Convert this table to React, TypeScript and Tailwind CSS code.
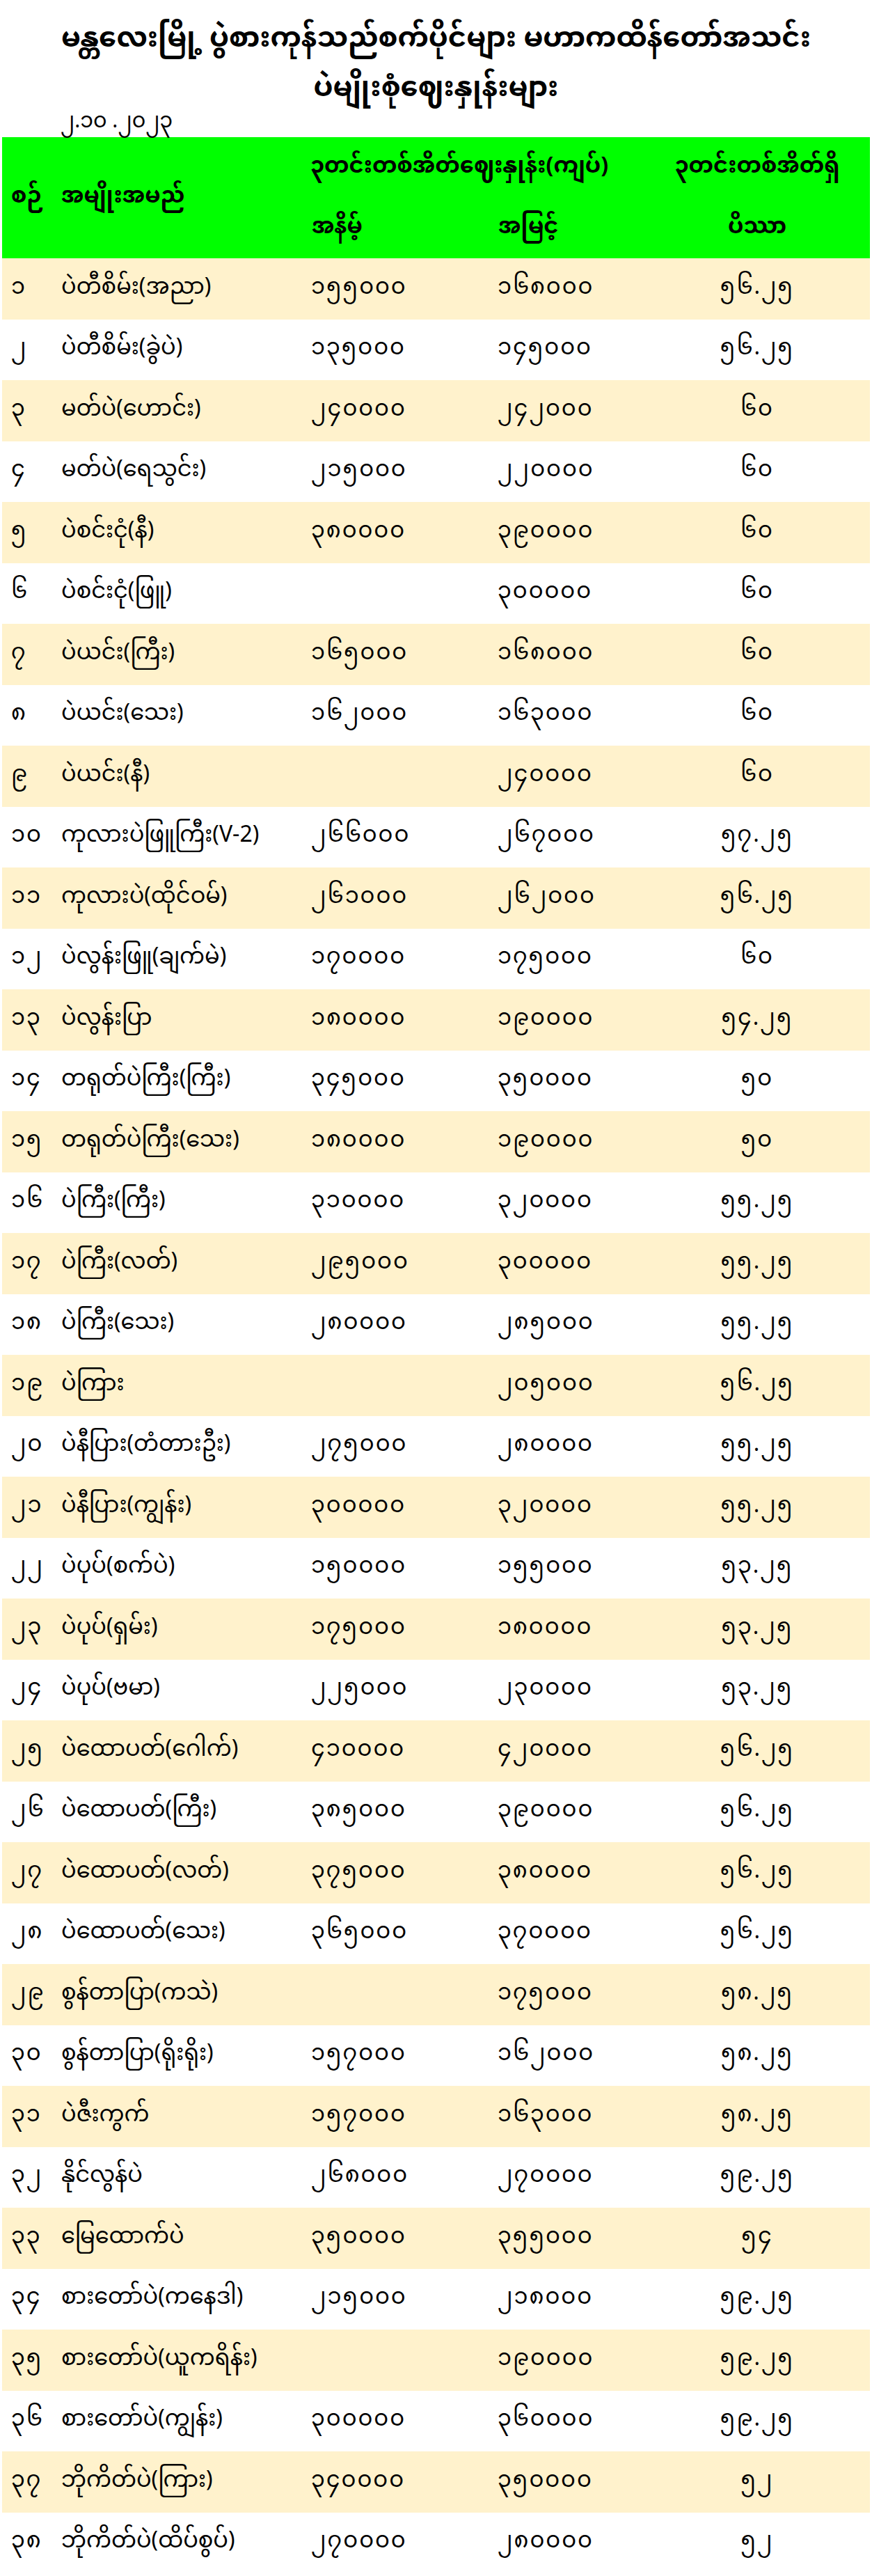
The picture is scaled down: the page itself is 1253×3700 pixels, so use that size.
const rows: [string, string, string, string, string][] = [
  ["၁", "ပဲတီစိမ်း(အညာ)", "၁၅၅၀၀၀", "၁၆၈၀၀၀", "၅၆.၂၅"],
  ["၂", "ပဲတီစိမ်း(ခွဲပဲ)", "၁၃၅၀၀၀", "၁၄၅၀၀၀", "၅၆.၂၅"],
  ["၃", "မတ်ပဲ(ဟောင်း)", "၂၄၀၀၀၀", "၂၄၂၀၀၀", "၆၀"],
  ["၄", "မတ်ပဲ(ရေသွင်း)", "၂၁၅၀၀၀", "၂၂၀၀၀၀", "၆၀"],
  ["၅", "ပဲစင်းငုံ(နီ)", "၃၈၀၀၀၀", "၃၉၀၀၀၀", "၆၀"],
  ["၆", "ပဲစင်းငုံ(ဖြူ)", "", "၃၀၀၀၀၀", "၆၀"],
  ["၇", "ပဲယင်း(ကြီး)", "၁၆၅၀၀၀", "၁၆၈၀၀၀", "၆၀"],
  ["၈", "ပဲယင်း(သေး)", "၁၆၂၀၀၀", "၁၆၃၀၀၀", "၆၀"],
  ["၉", "ပဲယင်း(နီ)", "", "၂၄၀၀၀၀", "၆၀"],
  ["၁၀", "ကုလားပဲဖြူကြီး(V-2)", "၂၆၆၀၀၀", "၂၆၇၀၀၀", "၅၇.၂၅"],
  ["၁၁", "ကုလားပဲ(ထိုင်ဝမ်)", "၂၆၁၀၀၀", "၂၆၂၀၀၀", "၅၆.၂၅"],
  ["၁၂", "ပဲလွန်းဖြူ(ချက်မဲ)", "၁၇၀၀၀၀", "၁၇၅၀၀၀", "၆၀"],
  ["၁၃", "ပဲလွန်းပြာ", "၁၈၀၀၀၀", "၁၉၀၀၀၀", "၅၄.၂၅"],
  ["၁၄", "တရုတ်ပဲကြီး(ကြီး)", "၃၄၅၀၀၀", "၃၅၀၀၀၀", "၅၀"],
  ["၁၅", "တရုတ်ပဲကြီး(သေး)", "၁၈၀၀၀၀", "၁၉၀၀၀၀", "၅၀"],
  ["၁၆", "ပဲကြီး(ကြီး)", "၃၁၀၀၀၀", "၃၂၀၀၀၀", "၅၅.၂၅"],
  ["၁၇", "ပဲကြီး(လတ်)", "၂၉၅၀၀၀", "၃၀၀၀၀၀", "၅၅.၂၅"],
  ["၁၈", "ပဲကြီး(သေး)", "၂၈၀၀၀၀", "၂၈၅၀၀၀", "၅၅.၂၅"],
  ["၁၉", "ပဲကြား", "", "၂၀၅၀၀၀", "၅၆.၂၅"],
  ["၂၀", "ပဲနီပြား(တံတားဦး)", "၂၇၅၀၀၀", "၂၈၀၀၀၀", "၅၅.၂၅"],
  ["၂၁", "ပဲနီပြား(ကျွန်း)", "၃၀၀၀၀၀", "၃၂၀၀၀၀", "၅၅.၂၅"],
  ["၂၂", "ပဲပုပ်(စက်ပဲ)", "၁၅၀၀၀၀", "၁၅၅၀၀၀", "၅၃.၂၅"],
  ["၂၃", "ပဲပုပ်(ရှမ်း)", "၁၇၅၀၀၀", "၁၈၀၀၀၀", "၅၃.၂၅"],
  ["၂၄", "ပဲပုပ်(ဗမာ)", "၂၂၅၀၀၀", "၂၃၀၀၀၀", "၅၃.၂၅"],
  ["၂၅", "ပဲထောပတ်(ဂေါက်)", "၄၁၀၀၀၀", "၄၂၀၀၀၀", "၅၆.၂၅"],
  ["၂၆", "ပဲထောပတ်(ကြီး)", "၃၈၅၀၀၀", "၃၉၀၀၀၀", "၅၆.၂၅"],
  ["၂၇", "ပဲထောပတ်(လတ်)", "၃၇၅၀၀၀", "၃၈၀၀၀၀", "၅၆.၂၅"],
  ["၂၈", "ပဲထောပတ်(သေး)", "၃၆၅၀၀၀", "၃၇၀၀၀၀", "၅၆.၂၅"],
  ["၂၉", "စွန်တာပြာ(ကသဲ)", "", "၁၇၅၀၀၀", "၅၈.၂၅"],
  ["၃၀", "စွန်တာပြာ(ရိုးရိုး)", "၁၅၇၀၀၀", "၁၆၂၀၀၀", "၅၈.၂၅"],
  ["၃၁", "ပဲဇီးကွက်", "၁၅၇၀၀၀", "၁၆၃၀၀၀", "၅၈.၂၅"],
  ["၃၂", "နိုင်လွန်ပဲ", "၂၆၈၀၀၀", "၂၇၀၀၀၀", "၅၉.၂၅"],
  ["၃၃", "မြေထောက်ပဲ", "၃၅၀၀၀၀", "၃၅၅၀၀၀", "၅၄"],
  ["၃၄", "စားတော်ပဲ(ကနေဒါ)", "၂၁၅၀၀၀", "၂၁၈၀၀၀", "၅၉.၂၅"],
  ["၃၅", "စားတော်ပဲ(ယူကရိန်း)", "", "၁၉၀၀၀၀", "၅၉.၂၅"],
  ["၃၆", "စားတော်ပဲ(ကျွန်း)", "၃၀၀၀၀၀", "၃၆၀၀၀၀", "၅၉.၂၅"],
  ["၃၇", "ဘိုကိတ်ပဲ(ကြား)", "၃၄၀၀၀၀", "၃၅၀၀၀၀", "၅၂"],
  ["၃၈", "ဘိုကိတ်ပဲ(ထိပ်စွပ်)", "၂၇၀၀၀၀", "၂၈၀၀၀၀", "၅၂"],
]

export default function App() {
  return (
    <div className="min-h-[3700px] bg-white px-[3px] font-['Noto_Sans_Myanmar','Padauk','Myanmar_Text',sans-serif] text-black">
      {/* title block */}
      <div className="flex h-[197px] flex-col">
        <h1 className="pt-[24px] text-center text-[40px] font-bold leading-[68px]">
          မန္တလေးမြို့ ပွဲစားကုန်သည်စက်ပိုင်များ မဟာကထိန်တော်အသင်း
        </h1>
        <h2 className="pt-[8px] text-center text-[40px] font-bold leading-[58px]">ပဲမျိုးစုံဈေးနှုန်းများ</h2>
        <div className="pl-[84px] text-[30px] leading-[36px]">၂.၁၀ .၂၀၂၃</div>
      </div>

      <table className="w-full table-fixed border-collapse text-[32px]">
        <colgroup>
          <col className="w-[73px]" />
          <col className="w-[364px]" />
          <col className="w-[263px]" />
          <col className="w-[223px]" />
          <col />
        </colgroup>
        <thead className="bg-[#00ff00]">
          <tr className="h-[87px]">
            <th rowSpan={2} className="pl-[13px] text-left font-bold">
              စဉ်
            </th>
            <th rowSpan={2} className="pl-[12px] text-left font-bold">
              အမျိုးအမည်
            </th>
            <th colSpan={2} className="whitespace-nowrap pl-[6px] text-left font-bold">
              ၃တင်းတစ်အိတ်ဈေးနှုန်း(ကျပ်)
            </th>
            <th className="whitespace-nowrap text-center font-bold">၃တင်းတစ်အိတ်ရှိ</th>
          </tr>
          <tr className="h-[87px]">
            <th className="pl-[8px] text-left font-bold">အနိမ့်</th>
            <th className="pl-[13px] text-left font-bold">အမြင့်</th>
            <th className="text-center font-bold">ပိဿာ</th>
          </tr>
        </thead>
        <tbody>
          {rows.map((row, index) => (
            <tr key={row[0]} className={`h-[87.5px] ${index % 2 === 0 ? "bg-[#fff2cc]" : "bg-white"}`}>
              <td className="pl-[13px] tracking-[2px]">{row[0]}</td>
              <td className="whitespace-nowrap pl-[12px]">{row[1]}</td>
              <td className="pl-[7px] tracking-[2px]">{row[2]}</td>
              <td className="pl-[12px] tracking-[2px]">{row[3]}</td>
              <td className="text-center tracking-[2px]">{row[4]}</td>
            </tr>
          ))}
        </tbody>
      </table>
    </div>
  )
}
